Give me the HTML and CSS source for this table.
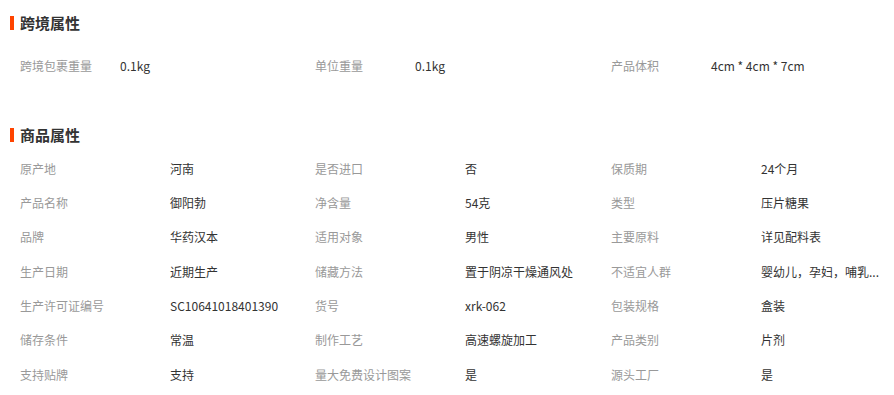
FILE: index.html
```html
<!DOCTYPE html>
<html lang="zh-CN">
<head>
<meta charset="utf-8">
<title>属性</title>
<link rel="stylesheet" href="styles.css">
</head>
<body>
<div class="page">
  <section class="section">
    <h2 class="title">跨境属性</h2>
    <ul class="attrs attrs-cross">
      <li class="attr"><span class="label">跨境包裹重量</span><span class="value">0.1kg</span></li>
      <li class="attr"><span class="label">单位重量</span><span class="value">0.1kg</span></li>
      <li class="attr"><span class="label">产品体积</span><span class="value">4cm * 4cm * 7cm</span></li>
    </ul>
  </section>
  <section class="section section-goods">
    <h2 class="title">商品属性</h2>
    <ul class="attrs attrs-goods">
      <li class="attr"><span class="label">原产地</span><span class="value">河南</span></li>
      <li class="attr"><span class="label">是否进口</span><span class="value">否</span></li>
      <li class="attr"><span class="label">保质期</span><span class="value">24个月</span></li>
      <li class="attr"><span class="label">产品名称</span><span class="value">御阳勃</span></li>
      <li class="attr"><span class="label">净含量</span><span class="value">54克</span></li>
      <li class="attr"><span class="label">类型</span><span class="value">压片糖果</span></li>
      <li class="attr"><span class="label">品牌</span><span class="value">华药汉本</span></li>
      <li class="attr"><span class="label">适用对象</span><span class="value">男性</span></li>
      <li class="attr"><span class="label">主要原料</span><span class="value">详见配料表</span></li>
      <li class="attr"><span class="label">生产日期</span><span class="value">近期生产</span></li>
      <li class="attr"><span class="label">储藏方法</span><span class="value">置于阴凉干燥通风处</span></li>
      <li class="attr"><span class="label">不适宜人群</span><span class="value">婴幼儿，孕妇，哺乳...</span></li>
      <li class="attr"><span class="label">生产许可证编号</span><span class="value">SC10641018401390</span></li>
      <li class="attr"><span class="label">货号</span><span class="value">xrk-062</span></li>
      <li class="attr"><span class="label">包装规格</span><span class="value">盒装</span></li>
      <li class="attr"><span class="label">储存条件</span><span class="value">常温</span></li>
      <li class="attr"><span class="label">制作工艺</span><span class="value">高速螺旋加工</span></li>
      <li class="attr"><span class="label">产品类别</span><span class="value">片剂</span></li>
      <li class="attr"><span class="label">支持贴牌</span><span class="value">支持</span></li>
      <li class="attr"><span class="label">量大免费设计图案</span><span class="value">是</span></li>
      <li class="attr"><span class="label">源头工厂</span><span class="value">是</span></li>
    </ul>
  </section>
</div>
</body>
</html>
```

FILE: styles.css
```css
html, body {
  margin: 0;
  padding: 0;
  background: #fff;
}

body {
  font-family: "Noto Sans CJK SC", "Liberation Sans", sans-serif;
  font-size: 12px;
  color: #333;
}

.page {
  padding-top: 13px;
}

.title {
  display: flex;
  align-items: center;
  gap: 6px;
  margin: 0;
  padding-left: 10px;
  height: 20px;
  line-height: 20px;
  font-size: 15px;
  font-weight: bold;
  color: #333;
}

.title::before {
  content: "";
  width: 4px;
  height: 14px;
  background: #ff4400;
}

.attrs {
  list-style: none;
  margin: 0;
  padding: 0 0 0 20px;
  display: grid;
  grid-template-columns: 295px 296px 1fr;
}

.attr {
  display: flex;
  align-items: center;
  white-space: nowrap;
}

.label {
  flex: none;
  color: #999;
}

.value {
  color: #333;
  white-space: nowrap;
}

.attrs-cross {
  margin-top: 15px;
  grid-auto-rows: 34px;
}

.attrs-cross .label {
  width: 100px;
}

.section-goods {
  margin-top: 43px;
}

.attrs-goods {
  margin-top: 6px;
  grid-auto-rows: 34.33px;
}

.attrs-goods .label {
  width: 150px;
}
```
